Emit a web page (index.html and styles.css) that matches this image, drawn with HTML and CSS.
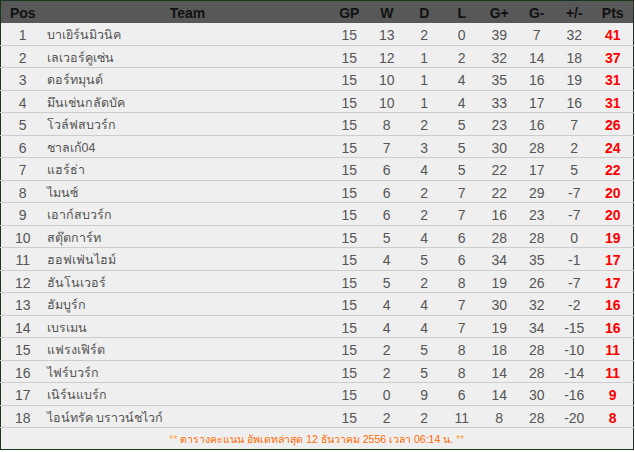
FILE: index.html
```html
<!DOCTYPE html>
<html lang="th">
<head>
<meta charset="utf-8">
<link rel="stylesheet" href="styles.css">
</head>
<body>
<table class="standings">
  <colgroup>
    <col class="c-pos"><col class="c-team">
    <col class="c-num"><col class="c-num"><col class="c-num"><col class="c-num">
    <col class="c-num"><col class="c-num"><col class="c-num"><col class="c-pts">
  </colgroup>
  <thead>
    <tr><th>Pos</th><th>Team</th><th>GP</th><th>W</th><th>D</th><th>L</th><th>G+</th><th>G-</th><th>+/-</th><th>Pts</th></tr>
  </thead>
  <tbody>
    <tr><td>1</td><td class="team">บาเยิร์นมิวนิค</td><td>15</td><td>13</td><td>2</td><td>0</td><td>39</td><td>7</td><td>32</td><td class="pts">41</td></tr>
    <tr><td>2</td><td class="team">เลเวอร์คูเซ่น</td><td>15</td><td>12</td><td>1</td><td>2</td><td>32</td><td>14</td><td>18</td><td class="pts">37</td></tr>
    <tr><td>3</td><td class="team">ดอร์ทมุนด์</td><td>15</td><td>10</td><td>1</td><td>4</td><td>35</td><td>16</td><td>19</td><td class="pts">31</td></tr>
    <tr><td>4</td><td class="team">มึนเช่นกลัดบัค</td><td>15</td><td>10</td><td>1</td><td>4</td><td>33</td><td>17</td><td>16</td><td class="pts">31</td></tr>
    <tr><td>5</td><td class="team">โวล์ฟสบวร์ก</td><td>15</td><td>8</td><td>2</td><td>5</td><td>23</td><td>16</td><td>7</td><td class="pts">26</td></tr>
    <tr><td>6</td><td class="team">ชาลเก้04</td><td>15</td><td>7</td><td>3</td><td>5</td><td>30</td><td>28</td><td>2</td><td class="pts">24</td></tr>
    <tr><td>7</td><td class="team">แฮร์ธ่า</td><td>15</td><td>6</td><td>4</td><td>5</td><td>22</td><td>17</td><td>5</td><td class="pts">22</td></tr>
    <tr><td>8</td><td class="team">ไมนซ์</td><td>15</td><td>6</td><td>2</td><td>7</td><td>22</td><td>29</td><td>-7</td><td class="pts">20</td></tr>
    <tr><td>9</td><td class="team">เอาก์สบวร์ก</td><td>15</td><td>6</td><td>2</td><td>7</td><td>16</td><td>23</td><td>-7</td><td class="pts">20</td></tr>
    <tr><td>10</td><td class="team">สตุ๊ตการ์ท</td><td>15</td><td>5</td><td>4</td><td>6</td><td>28</td><td>28</td><td>0</td><td class="pts">19</td></tr>
    <tr><td>11</td><td class="team">ฮอฟเฟ่นไฮม์</td><td>15</td><td>4</td><td>5</td><td>6</td><td>34</td><td>35</td><td>-1</td><td class="pts">17</td></tr>
    <tr><td>12</td><td class="team">ฮันโนเวอร์</td><td>15</td><td>5</td><td>2</td><td>8</td><td>19</td><td>26</td><td>-7</td><td class="pts">17</td></tr>
    <tr><td>13</td><td class="team">ฮัมบูร์ก</td><td>15</td><td>4</td><td>4</td><td>7</td><td>30</td><td>32</td><td>-2</td><td class="pts">16</td></tr>
    <tr><td>14</td><td class="team">เบรเมน</td><td>15</td><td>4</td><td>4</td><td>7</td><td>19</td><td>34</td><td>-15</td><td class="pts">16</td></tr>
    <tr><td>15</td><td class="team">แฟรงเฟิร์ต</td><td>15</td><td>2</td><td>5</td><td>8</td><td>18</td><td>28</td><td>-10</td><td class="pts">11</td></tr>
    <tr><td>16</td><td class="team">ไฟร์บวร์ก</td><td>15</td><td>2</td><td>5</td><td>8</td><td>14</td><td>28</td><td>-14</td><td class="pts">11</td></tr>
    <tr><td>17</td><td class="team">เนิร์นแบร์ก</td><td>15</td><td>0</td><td>9</td><td>6</td><td>14</td><td>30</td><td>-16</td><td class="pts">9</td></tr>
    <tr><td>18</td><td class="team">ไอน์ทรัค บราวน์ชไวก์</td><td>15</td><td>2</td><td>2</td><td>11</td><td>8</td><td>28</td><td>-20</td><td class="pts">8</td></tr>
  </tbody>
  <tfoot>
    <tr><td colspan="10" class="note"><span class="star">**</span> ตารางคะแนน อัพเดทล่าสุด 12 ธันวาคม 2556 เวลา 06:14 น. <span class="star">**</span></td></tr>
  </tfoot>
</table>
</body>
</html>
```
FILE: styles.css
```css
html, body {
  margin: 0;
  padding: 0;
  background: #ffffff;
}
.standings {
  width: 633px;
  table-layout: fixed;
  border-collapse: collapse;
  border: 1px solid #1c331c;
  background: #efefef;
  font-family: "Liberation Sans", Arial, Tahoma, sans-serif;
  font-size: 14px;
  line-height: 16px;
  color: #555555;
}
.c-pos { width: 44px; }
.c-team { width: 286px; }
.c-num { width: 37.5px; }
.c-pts { width: 40px; }
.standings th {
  background: #585858;
  color: #111111;
  font-weight: bold;
  height: 21px;
  padding: 1px 0 0;
  text-align: center;
}
.standings td {
  height: 18.5px;
  padding: 3px 0 0;
  text-align: center;
  border-bottom: 1px solid #cccccc;
}
.standings td.team {
  text-align: left;
  padding-left: 2px;
  font-size: 12.5px;
}
.standings td.pts {
  color: #ff0000;
  font-weight: bold;
}
.standings td.note {
  height: 20px;
  padding-top: 1px;
  border-bottom: none;
  color: #ff6a00;
  font-size: 10.5px;
  line-height: 14px;
}
.star {
  color: #ffa64d;
}
```
